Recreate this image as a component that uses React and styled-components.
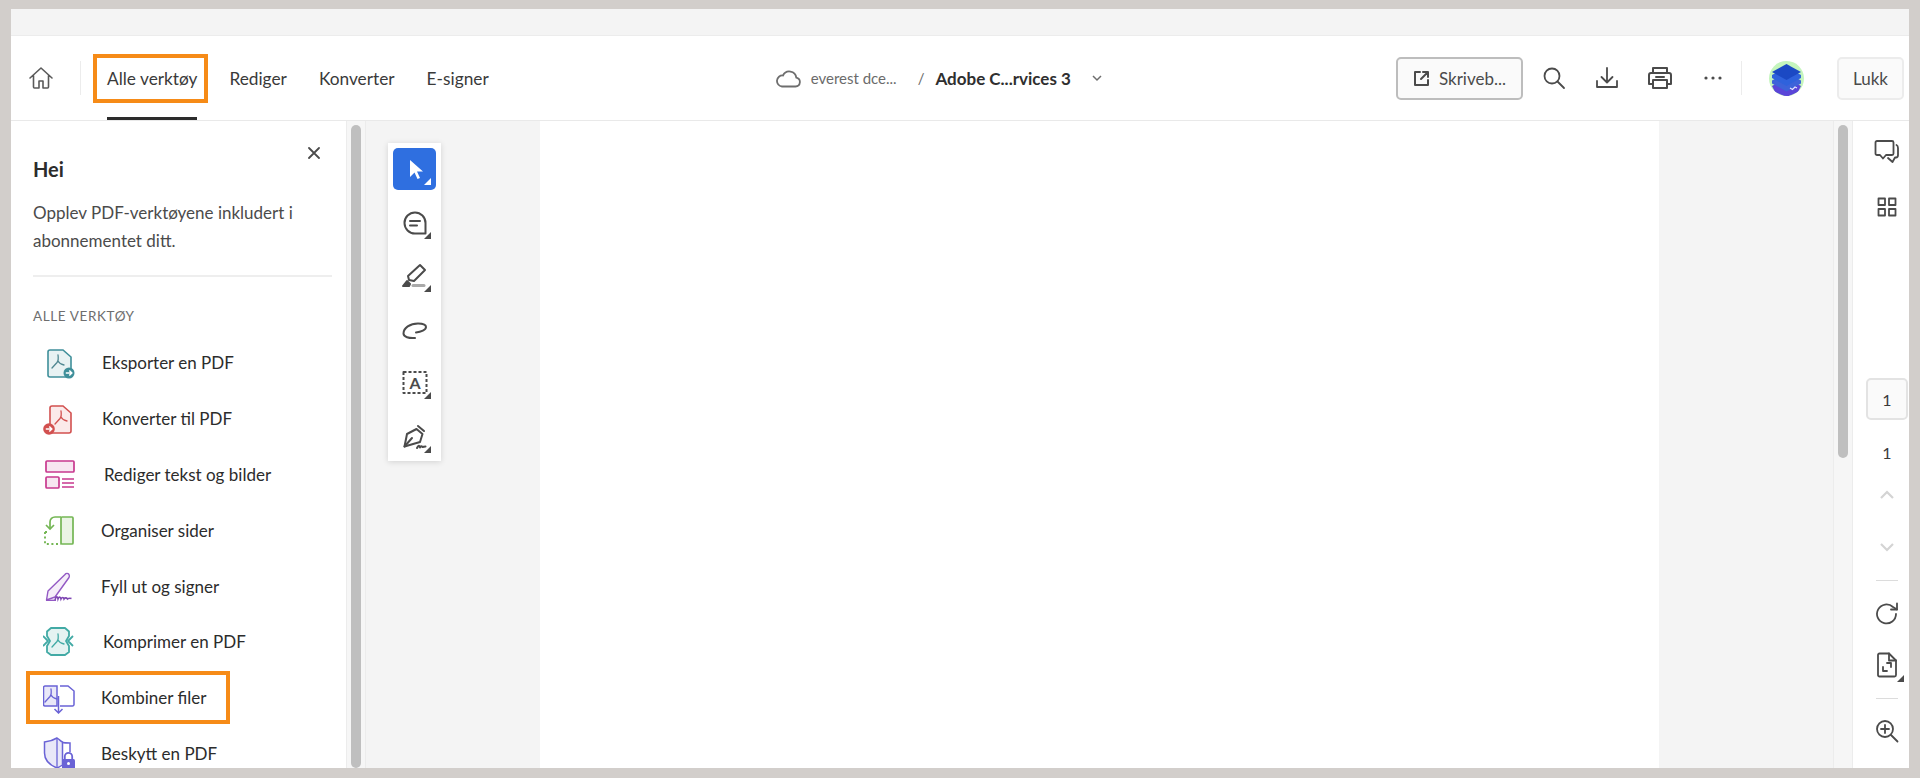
import React from "react";
import styled, { createGlobalStyle } from "styled-components";

const GlobalStyle = createGlobalStyle`
  html, body {
    margin: 0;
    padding: 0;
    height: 100%;
    background: #d2cecb;
    font-family: "Lato", "Liberation Sans", sans-serif;
    color: #2c2c2c;
  }
  *, *::before, *::after {
    box-sizing: border-box;
  }
`;

// little pdf swoosh used in most of the tool icons
const Swoosh = ({ x = 0, y = 0, color }) => (
  <path
    transform={`translate(${x} ${y})`}
    d="M6 0C6.500 3 6.500 5.500 5 7.500L0 13M6 6C7 8 9 9.500 12 10"
    fill="none"
    stroke={color}
    strokeWidth="1.300"
    strokeLinecap="round"
  />
);

const ExportIcon = () => (
  <svg width="32" height="32" viewBox="0 0 32 32" fill="none">
    <path d="M5 5a2 2 0 0 1 2-2h13l8 7v18a2 2 0 0 1-2 2H7a2 2 0 0 1-2-2z" fill="#e8f2f3" stroke="#3f8f9a" strokeWidth="1.600" />
    <Swoosh x={9} y={8} color="#4f8791" />
    <circle cx="26" cy="26" r="5.500" fill="#3f8f9a" />
    <path d="M22.800 26h6M26.300 23.500l2.500 2.500-2.500 2.500" stroke="#fff" strokeWidth="1.500" />
  </svg>
);

const ConvertIcon = () => (
  <svg width="32" height="32" viewBox="0 0 32 32" fill="none">
    <path d="M7 5a2 2 0 0 1 2-2h11l8 7v18a2 2 0 0 1-2 2H9a2 2 0 0 1-2-2z" fill="#fbeaea" stroke="#d2504f" strokeWidth="1.600" />
    <Swoosh x={12} y={8} color="#d2504f" />
    <circle cx="6" cy="26" r="5.800" fill="#d2504f" />
    <path d="M2.800 26h6M6.300 23.500l2.500 2.500-2.500 2.500" stroke="#fff" strokeWidth="1.500" />
  </svg>
);

const EditIcon = () => (
  <svg width="32" height="32" viewBox="0 0 32 32" fill="none">
    <rect x="3" y="3" width="28" height="11" rx="1" fill="#f7e6f1" stroke="#c8398f" strokeWidth="1.700" />
    <rect x="3" y="19" width="13" height="11" rx="1" fill="#f7e6f1" stroke="#c8398f" strokeWidth="1.700" />
    <path d="M19 21h12M19 25h12M19 29h12" stroke="#c8398f" strokeWidth="1.700" />
  </svg>
);

const OrganizeIcon = () => (
  <svg width="32" height="32" viewBox="0 0 32 32" fill="none">
    <rect x="18" y="3" width="12" height="27" rx="1" fill="#eaf4e4" stroke="#74b654" strokeWidth="1.700" />
    <path d="M18 3h-6a5 5 0 0 0-5 5v7" stroke="#74b654" strokeWidth="1.700" />
    <path d="M3 11l4 4 4-4" stroke="#74b654" strokeWidth="1.700" />
    <path d="M2 18v12h16M2 18h4" stroke="#74b654" strokeWidth="1.900" strokeDasharray="2 2.600" />
  </svg>
);

const SignIcon = () => (
  <svg width="32" height="32" viewBox="0 0 32 32" fill="none">
    <path d="M22 4.500c1-1.500 3-1.500 4 0 .5 1 .5 2 0 3L12 27l-8.500 3L5 21z" fill="#f5eef9" stroke="#9359c4" strokeWidth="1.400" strokeLinejoin="round" />
    <path d="M3 30.300h10" stroke="#9359c4" strokeWidth="1.400" />
    <path d="M12 30c1-4 2.500-4 3-1 1-2.500 2.500-2.500 3 0 1-2 2.500-2 3 0 1-1.500 2.500-1.500 3.500 0 1-.8 2.500-1 4-.5" stroke="#7f47b3" strokeWidth="1.600" />
  </svg>
);

const CompressIcon = () => (
  <svg width="32" height="32" viewBox="0 0 32 32" fill="none">
    <path d="M8 2h14l4 3.500V10l-3 5 3 5v6l-4 3H8l-4-3v-6l3-5-3-5V5.500z" fill="#e5f3f2" stroke="#42aaa5" strokeWidth="1.800" strokeLinejoin="round" />
    <path d="M0 10l5 5-5 5M30 10l-5 5 5 5" stroke="#42aaa5" strokeWidth="1.800" />
    <Swoosh x={9} y={8} color="#42aaa5" />
  </svg>
);

const CombineIcon = () => (
  <svg width="32" height="32" viewBox="0 0 32 32" fill="none">
    <path d="M14 4H2a1.500 1.500 0 0 0-1.500 1.500v17A1.500 1.500 0 0 0 2 24h12z" fill="#e9e8f8" stroke="#6a63d6" strokeWidth="1.500" />
    <path d="M17 4h8l6 5v13.500a1.500 1.500 0 0 1-1.500 1.500H17" stroke="#6a63d6" strokeWidth="1.500" />
    <Swoosh x={2} y={7} color="#6a63d6" />
    <path d="M15.500 14v17M11.500 27l4 4 4-4" stroke="#6a63d6" strokeWidth="1.500" />
  </svg>
);

const ProtectIcon = () => (
  <svg width="32" height="32" viewBox="0 0 32 32" fill="none">
    <path d="M14 1C10 3.500 6 4.500 1.500 5v11c0 7 5 12 12.500 15 2-.7 4-2 5.500-3V5C18 4.500 17 3 14 1z" fill="#e9e8f8" stroke="#6a63d6" strokeWidth="1.500" />
    <path d="M19 5.500c3 .5 5 .5 8 .5v9" stroke="#6a63d6" strokeWidth="1.500" />
    <path d="M14 1v30" stroke="#6a63d6" strokeWidth="1.300" />
    <rect x="19" y="22" width="13" height="10" rx="1.500" fill="#6a63d6" />
    <path d="M21.800 22v-2.500a3.700 3.700 0 0 1 7.400 0V22" stroke="#6a63d6" strokeWidth="1.800" />
    <circle cx="25.500" cy="26.500" r="1.500" fill="#fff" />
  </svg>
);

const toolItems = [
  { label: "Eksporter en PDF", icon: <ExportIcon />, shift: 0 },
  { label: "Konverter til PDF", icon: <ConvertIcon />, shift: 0 },
  { label: "Rediger tekst og bilder", icon: <EditIcon />, shift: 2 },
  { label: "Organiser sider", icon: <OrganizeIcon />, shift: -1 },
  { label: "Fyll ut og signer", icon: <SignIcon />, shift: -1 },
  { label: "Komprimer en PDF", icon: <CompressIcon />, shift: 1 },
  { label: "Kombiner filer", icon: <CombineIcon />, shift: -1, boxed: true },
  { label: "Beskytt en PDF", icon: <ProtectIcon />, shift: -1 }
];

const floatingTools = [
  {
    key: "select",
    active: true,
    icon: <path d="M8 4v17l4.500-4.500 3 6.500 2.500-1-3-6.500H21z" fill="#fff" />
  },
  {
    key: "comment",
    icon: (
      <>
        <path d="M13 2.500a10.500 10.500 0 1 0 0 21h10.500V13A10.500 10.500 0 0 0 13 2.500z" />
        <path d="M8 11h10M8 15.500h7" />
      </>
    )
  },
  {
    key: "highlight",
    icon: (
      <>
        <path d="M18 2l5 5-11 11-5-1-1-4z" />
        <path d="M1 23l4-5 3 3-1 2z" fill="#4b4b4b" />
        <path d="M11 22.500h11" stroke="#a9a9a9" strokeWidth="3" />
      </>
    )
  },
  {
    key: "lasso",
    icon: <path d="M13 21c-6 .5-11.500-1-11.500-4.500C1.500 11 8 6.500 16 6.500c4 0 8 1 8 3.500 0 3-5 5-10 5.500" />,
    plain: true
  },
  {
    key: "text",
    icon: (
      <>
        <rect x="1.500" y="2" width="23" height="21" strokeDasharray="3 2" strokeLinecap="butt" />
        <LetterMark x="13" y="18.500">A</LetterMark>
      </>
    )
  },
  {
    key: "pen",
    icon: (
      <>
        <path d="M16 2l6 5M14.500 5l6 5-2.500 8-15.500 4.500L5 10z" />
        <path d="M2.500 22.500L10 14" />
        <path d="M15 24c1.500-3 2.500-3 3-.5.800-1.500 1.500-1.500 2.500-.5 1-.5 2-.5 3-.5" />
      </>
    )
  }
];

function LetterMark({ x, y, children }) {
  return (
    <text x={x} y={y} textAnchor="middle" fontSize="16" fontWeight="700" fontFamily="Lato, sans-serif" fill="#4b4b4b" stroke="none">
      {children}
    </text>
  );
}

const Frame = styled.div`
  position: fixed;
  inset: 9px 11px 10px 11px;
  display: flex;
  flex-direction: column;
  overflow: hidden;
  background: #fff;
`;

const TopStrip = styled.div`
  height: 27px;
  flex: none;
  background: #f4f4f4;
  border-bottom: 1px solid #ececec;
`;

const Header = styled.header`
  height: 85px;
  flex: none;
  display: flex;
  align-items: center;
  background: #fff;
  border-bottom: 1px solid #e9e9e9;
  padding-right: 5px;
`;

const HomeButton = styled.button`
  width: 60px;
  height: 40px;
  padding: 0;
  border: 0;
  background: none;
  display: flex;
  align-items: center;
  justify-content: center;
`;

const Divider = styled.span`
  width: 1px;
  height: 34px;
  flex: none;
  background: #ececec;
  margin: ${(props) => props.$margin || "0"};
`;

const Tabs = styled.nav`
  height: 100%;
  display: flex;
  gap: 32px;
  margin-left: 26px;
`;

const Tab = styled.div`
  position: relative;
  height: 100%;
  display: flex;
  align-items: center;
  font-size: 17.300px;
  color: #3a3a3a;

  ${(props) =>
    props.$active &&
    `
    &::before {
      content: "";
      position: absolute;
      left: 0;
      right: 0;
      bottom: 0;
      height: 3px;
      background: #2c2c2c;
    }
    &::after {
      content: "";
      position: absolute;
      left: -14px;
      right: -11px;
      top: 18px;
      height: 49px;
      border: 4px solid #f68b17;
    }
  `}
`;

const Breadcrumb = styled.div`
  display: flex;
  align-items: center;
  margin-left: 287px;
`;

const Folder = styled.span`
  font-size: 15px;
  color: #6b6b6b;
  margin-left: 10px;
`;

const Slash = styled.span`
  font-size: 15px;
  color: #6b6b6b;
  margin: 0 11px 0 21px;
`;

const FileName = styled.span`
  font-size: 17px;
  font-weight: 700;
  color: #2f2f2f;
`;

const ChevronSlot = styled.span`
  display: flex;
  margin-left: 20px;
`;

const Actions = styled.div`
  margin-left: auto;
  display: flex;
  align-items: center;
`;

const OutlineButton = styled.button`
  width: 127px;
  height: 43px;
  display: flex;
  align-items: center;
  justify-content: center;
  gap: 9px;
  padding: 0;
  background: #fafafa;
  border: 2px solid #bdbdbd;
  border-radius: 5px;
  font: inherit;
  font-size: 17px;
  color: #4b4b4b;
  margin-right: 11px;
`;

const IconRow = styled.div`
  display: flex;
  gap: 13px;
`;

const IconButton = styled.button`
  width: 40px;
  height: 40px;
  padding: 0;
  border: 0;
  background: none;
  display: flex;
  align-items: center;
  justify-content: center;
`;

const Avatar = styled.div`
  width: 35px;
  height: 35px;
  flex: none;
  border-radius: 50%;
  background: #c5f5bd;
  margin: 0 33px 0 27px;
  overflow: hidden;
`;

const CloseButton = styled.button`
  width: 67px;
  height: 43px;
  padding: 0;
  background: #fafafa;
  border: 2px solid #ececec;
  border-radius: 5px;
  font: inherit;
  font-size: 17px;
  color: #4b4b4b;
`;

const Main = styled.main`
  flex: 1;
  min-height: 0;
  display: flex;
`;

const SidePanel = styled.aside`
  width: 335px;
  flex: none;
  background: #fff;
  position: relative;
  overflow: hidden;
`;

const PanelClose = styled.button`
  position: absolute;
  top: 22px;
  right: 22px;
  width: 20px;
  height: 20px;
  padding: 0;
  border: 0;
  background: none;
  display: flex;
  align-items: center;
  justify-content: center;
`;

const PanelHead = styled.div`
  margin: 0 14px 0 22px;
  padding: 34px 0 20px;
  border-bottom: 2px solid #eeeeee;
`;

const PanelTitle = styled.h2`
  margin: 0;
  font-size: 20px;
  line-height: 28px;
  font-weight: 700;
  color: #2c2c2c;
`;

const PanelText = styled.p`
  margin: 16px 0 0;
  font-size: 17px;
  line-height: 28px;
  color: #4b4b4b;
`;

const SectionLabel = styled.div`
  margin: 30px 0 0 22px;
  font-size: 13.500px;
  line-height: 18px;
  letter-spacing: 0.600px;
  color: #6e6e6e;
`;

const ToolList = styled.ul`
  list-style: none;
  margin: 10px 0 0;
  padding: 0;
`;

const ToolRow = styled.li`
  position: relative;
  height: 55.800px;
  display: flex;
  align-items: center;
  padding-left: 32px;
  font-size: 17px;
  color: #2c2c2c;

  ${(props) =>
    props.$boxed &&
    `
    &::after {
      content: "";
      position: absolute;
      left: 15px;
      width: 204px;
      top: 1px;
      height: 53px;
      border: 4px solid #f68b17;
    }
  `}
`;

const ToolIcon = styled.span`
  width: 32px;
  height: 32px;
  flex: none;
  display: flex;
`;

const ToolLabel = styled.span`
  margin-left: ${(props) => 27 + props.$shift}px;
`;

const ScrollGutter = styled.div`
  width: 20px;
  flex: none;
  background: #f6f6f6;
  border-left: 1px solid #ececec;
  border-right: 1px solid #ececec;
  padding: 4px 4px 0;
`;

const ScrollThumb = styled.div`
  height: ${(props) => props.$height};
  border-radius: 5px;
  background: #bfbfbf;
`;

const Canvas = styled.div`
  flex: 1;
  position: relative;
  display: flex;
  justify-content: center;
  background: #f4f4f4;
`;

const Page = styled.div`
  width: 1119px;
  background: #fff;
`;

const FloatingBar = styled.div`
  position: absolute;
  left: 22px;
  top: 22px;
  width: 53px;
  height: 318px;
  padding: 5px;
  display: flex;
  flex-direction: column;
  gap: 11.500px;
  background: #fff;
  box-shadow: 0 1px 6px rgba(0, 0, 0, 0.14);
`;

const FloatingButton = styled.button`
  position: relative;
  width: 43px;
  height: 42px;
  flex: none;
  padding: 0;
  border: 0;
  border-radius: 5px;
  display: flex;
  align-items: center;
  justify-content: center;
  background: ${(props) => (props.$active ? "#2f6fe0" : "transparent")};

  &::after {
    content: "";
    position: absolute;
    right: 5px;
    bottom: 5px;
    width: 0;
    height: 0;
    border-left: 7px solid transparent;
    border-bottom: 7px solid ${(props) => (props.$active ? "#fff" : "#4b4b4b")};
    display: ${(props) => (props.$plain ? "none" : "block")};
  }
`;

const Rail = styled.aside`
  width: 56px;
  flex: none;
  display: flex;
  flex-direction: column;
  align-items: center;
  padding: 11px 0 0 12px;
  background: #fff;
`;

const RailButton = styled.button`
  position: relative;
  width: 40px;
  height: 40px;
  flex: none;
  padding: 0;
  border: 0;
  background: none;
  display: flex;
  align-items: center;
  justify-content: center;
  margin-top: ${(props) => props.$top || 0}px;

  ${(props) =>
    props.$corner &&
    `
    &::after {
      content: "";
      position: absolute;
      right: 3px;
      bottom: 3px;
      border-left: 7px solid transparent;
      border-bottom: 7px solid #4b4b4b;
    }
  `}
`;

const PageBox = styled.div`
  width: 42px;
  height: 42px;
  flex: none;
  margin-top: 151px;
  display: flex;
  align-items: center;
  justify-content: center;
  background: #fafafa;
  border: 2px solid #e3e3e3;
  border-radius: 5px;
  font-size: 16px;
  color: #3a3a3a;
`;

const PageTotal = styled.div`
  height: 26px;
  flex: none;
  margin-top: 20px;
  font-size: 16px;
  line-height: 26px;
  color: #3a3a3a;
`;

const RailRule = styled.span`
  width: 22px;
  height: 1px;
  flex: none;
  background: #dcdcdc;
  margin-top: 13px;
`;

const stroke = { fill: "none", stroke: "#4b4b4b", strokeWidth: 1.800, strokeLinecap: "round", strokeLinejoin: "round" };

const App = () => {
  return (
    <>
      <GlobalStyle />
      <Frame>
        <TopStrip />
        <Header>
          <HomeButton aria-label="Hjem">
            <svg width="26" height="24" viewBox="0 0 26 24" {...stroke} stroke="#5a5a5a" strokeWidth="1.600">
              <path d="M2 12L13 2l11 10M5.500 9.500V21a1 1 0 0 0 1 1h4.500v-7h4v7h4.500a1 1 0 0 0 1-1V9.500" />
            </svg>
          </HomeButton>
          <Divider $margin="0 0 0 9px" />
          <Tabs>
            <Tab $active>Alle verktøy</Tab>
            <Tab>Rediger</Tab>
            <Tab>Konverter</Tab>
            <Tab>E-signer</Tab>
          </Tabs>
          <Breadcrumb>
            <svg width="25" height="20" viewBox="0 0 25 20" fill="none" stroke="#6e6e6e" strokeWidth="1.800">
              <path d="M6 18.500h13.500a4.500 4.500 0 0 0 .8-8.900A7 7 0 0 0 7 7.500a5.500 5.500 0 0 0-1 11z" />
            </svg>
            <Folder>everest dce...</Folder>
            <Slash>/</Slash>
            <FileName>Adobe C...rvices 3</FileName>
            <ChevronSlot>
              <svg width="12" height="8" viewBox="0 0 12 8" fill="none" stroke="#6e6e6e" strokeWidth="1.500">
                <path d="M2 2l4 4 4-4" />
              </svg>
            </ChevronSlot>
          </Breadcrumb>
          <Actions>
            <OutlineButton>
              <svg width="17" height="17" viewBox="0 0 17 17" {...stroke} strokeWidth="2">
                <path d="M7 2H2v13h13v-5M10 2h5v5M15 2L8 9" />
              </svg>
              Skriveb...
            </OutlineButton>
            <IconRow>
              <IconButton aria-label="Søk">
                <svg width="24" height="24" viewBox="0 0 24 24" {...stroke}>
                  <circle cx="10" cy="10" r="7.500" />
                  <path d="M15.500 15.500L22 22" />
                </svg>
              </IconButton>
              <IconButton aria-label="Last ned">
                <svg width="24" height="24" viewBox="0 0 24 24" {...stroke}>
                  <path d="M12 2v14M6.500 11l5.500 5.500 5.500-5.500M2 15v6h20v-6" />
                </svg>
              </IconButton>
              <IconButton aria-label="Skriv ut">
                <svg width="26" height="24" viewBox="0 0 26 24" {...stroke} strokeWidth="2">
                  <path d="M6 7V2h14v5M6 18H2V9a2 2 0 0 1 2-2h18a2 2 0 0 1 2 2v9h-4" />
                  <path d="M6 14h14v8H6z" />
                  <path d="M9 11h8" />
                </svg>
              </IconButton>
              <IconButton aria-label="Mer">
                <svg width="20" height="4" viewBox="0 0 20 4" fill="#4b4b4b">
                  <circle cx="3" cy="2" r="1.600" />
                  <circle cx="10" cy="2" r="1.600" />
                  <circle cx="17" cy="2" r="1.600" />
                </svg>
              </IconButton>
            </IconRow>
            <Divider $margin="0 0 0 8px" />
            <Avatar>
              <svg width="35" height="35" viewBox="0 0 35 35">
                <path d="M3 25l14.500-8L32 25l-3 6-11.500 5L6 31z" fill="#5a45d8" />
                <path d="M3 19.500l14.500-8L32 19.500v3l-14.500 8-14.500-8z" fill="#3d63d9" />
                <path d="M3 14l14.500-8L32 14v3l-14.500 8L3 17z" fill="#2f62dc" />
                <path d="M3 11l14.500-8L32 11l-14.500 8z" fill="#1b49c4" />
                <path d="M21 27l2.500 1.500L26 26l2 1" fill="none" stroke="#dfe6ff" strokeWidth="1.200" />
              </svg>
            </Avatar>
            <CloseButton>Lukk</CloseButton>
          </Actions>
        </Header>
        <Main>
          <SidePanel>
            <PanelClose aria-label="Lukk panel">
              <svg width="12" height="12" viewBox="0 0 12 12" {...stroke}>
                <path d="M1 1l10 10M11 1L1 11" />
              </svg>
            </PanelClose>
            <PanelHead>
              <PanelTitle>Hei</PanelTitle>
              <PanelText>
                Opplev PDF-verktøyene inkludert i
                <br />
                abonnementet ditt.
              </PanelText>
            </PanelHead>
            <SectionLabel>ALLE VERKTØY</SectionLabel>
            <ToolList>
              {toolItems.map((item) => (
                <ToolRow key={item.label} $boxed={item.boxed}>
                  <ToolIcon>{item.icon}</ToolIcon>
                  <ToolLabel $shift={item.shift}>{item.label}</ToolLabel>
                </ToolRow>
              ))}
            </ToolList>
          </SidePanel>
          <ScrollGutter>
            <ScrollThumb $height="100%" />
          </ScrollGutter>
          <Canvas>
            <Page />
            <FloatingBar>
              {floatingTools.map((tool) => (
                <FloatingButton key={tool.key} $active={tool.active} $plain={tool.plain}>
                  <svg width="26" height="26" viewBox="0 0 26 26" {...stroke} strokeWidth="2" stroke={tool.active ? "none" : "#4b4b4b"}>
                    {tool.icon}
                  </svg>
                </FloatingButton>
              ))}
            </FloatingBar>
          </Canvas>
          <ScrollGutter>
            <ScrollThumb $height="333px" />
          </ScrollGutter>
          <Rail>
            <RailButton aria-label="Kommentarer">
              <svg width="26" height="26" viewBox="0 0 26 26" {...stroke}>
                <path d="M3 2h15a1.500 1.500 0 0 1 1.500 1.500v11a1.500 1.500 0 0 1-1.500 1.500h-6l-3 3.500L6 16H3a1.500 1.500 0 0 1-1.500-1.500v-11A1.500 1.500 0 0 1 3 2z" />
                <path d="M22.500 6c1 .5 1.500 1.500 1.500 3v7c0 1.500-.5 2.500-2 2.500h-1L18.500 23 14 19" />
              </svg>
            </RailButton>
            <RailButton $top={15} aria-label="Miniatyrbilder">
              <svg width="20" height="20" viewBox="0 0 20 20" {...stroke}>
                <rect x="1.500" y="1.500" width="6.500" height="6.500" />
                <rect x="12" y="1.500" width="6.500" height="6.500" />
                <rect x="1.500" y="12" width="6.500" height="6.500" />
                <rect x="12" y="12" width="6.500" height="6.500" />
              </svg>
            </RailButton>
            <PageBox>1</PageBox>
            <PageTotal>1</PageTotal>
            <RailButton $top={9} aria-label="Forrige side">
              <svg width="16" height="10" viewBox="0 0 16 10" fill="none" stroke="#d4d4d4" strokeWidth="2.200">
                <path d="M2 8l6-6 6 6" />
              </svg>
            </RailButton>
            <RailButton $top={12} aria-label="Neste side">
              <svg width="16" height="10" viewBox="0 0 16 10" fill="none" stroke="#d4d4d4" strokeWidth="2.200">
                <path d="M2 2l6 6 6-6" />
              </svg>
            </RailButton>
            <RailRule />
            <RailButton $top={13} aria-label="Roter">
              <svg width="24" height="24" viewBox="0 0 24 24" {...stroke}>
                <path d="M21 12a9.500 9.500 0 1 1-3-7l4 2.500" />
                <path d="M22 1.500V7.500h-6" />
              </svg>
            </RailButton>
            <RailButton $top={11} $corner aria-label="Tilpass">
              <svg width="22" height="26" viewBox="0 0 22 26" {...stroke}>
                <path d="M2 3a1.500 1.500 0 0 1 1.500-1.500H13L20 8.500V23a1.500 1.500 0 0 1-1.500 1.500h-15A1.500 1.500 0 0 1 2 23z" />
                <path d="M13 1.500v7h7" />
                <path d="M11 11h4v4M11 19H7v-4" />
              </svg>
            </RailButton>
            <RailRule />
            <RailButton $top={12} aria-label="Zoom inn">
              <svg width="24" height="24" viewBox="0 0 24 24" {...stroke}>
                <circle cx="10" cy="10" r="8" />
                <path d="M16 16l6.500 6.500M6 10h8M10 6v8" />
              </svg>
            </RailButton>
          </Rail>
        </Main>
      </Frame>
    </>
  );
};

export default App;
